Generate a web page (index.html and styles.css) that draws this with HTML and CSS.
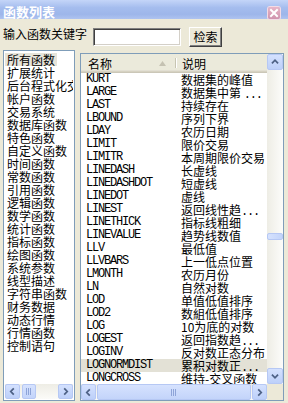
FILE: index.html
```html
<!DOCTYPE html>
<html lang="zh-CN">
<head>
<meta charset="utf-8">
<title>函数列表</title>
<link rel="stylesheet" href="styles.css">
</head>
<body>
<div class="window">
  <div class="titlebar">
    <span class="title">函数列表</span>
    <span class="close"><svg width="12" height="12" viewBox="0 0 12 12"><path d="M3 3 L9 9 M9 3 L3 9" stroke="#fff" stroke-width="2" stroke-linecap="square"/></svg></span>
  </div>
  <div class="search">
    <label class="kw-label">输入函数关键字</label>
    <input class="kw" type="text">
    <button class="btn">检索</button>
  </div>
  <div class="main">
    <div class="catlist">
      <ul class="cats">
        <li class="sel"><span>所有函数</span></li>
        <li><span>扩展统计</span></li>
        <li><span>后台程式化交易</span></li>
        <li><span>帐户函数</span></li>
        <li><span>交易系统</span></li>
        <li><span>数据库函数</span></li>
        <li><span>特色函数</span></li>
        <li><span>自定义函数</span></li>
        <li><span>时间函数</span></li>
        <li><span>常数函数</span></li>
        <li><span>引用函数</span></li>
        <li><span>逻辑函数</span></li>
        <li><span>数学函数</span></li>
        <li><span>统计函数</span></li>
        <li><span>指标函数</span></li>
        <li><span>绘图函数</span></li>
        <li><span>系统参数</span></li>
        <li><span>线型描述</span></li>
        <li><span>字符串函数</span></li>
        <li><span>财务数据</span></li>
        <li><span>动态行情</span></li>
        <li><span>行情函数</span></li>
        <li><span>控制语句</span></li>
      </ul>
      <div class="hscroll small">
        <span class="sbtn"><svg width="15" height="15" viewBox="0 0 15 15"><polyline points="9,4 5.5,7.5 9,11" fill="none" stroke="#4d6185" stroke-width="2"/></svg></span>
        <span class="thumb small-thumb"><svg width="8" height="7" viewBox="0 0 8 7"><path d="M1.5 0v7M3.5 0v7M5.5 0v7" stroke="#8ea4d8" stroke-width="1"/></svg></span>
        <span class="track"></span>
        <span class="sbtn"><svg width="15" height="15" viewBox="0 0 15 15"><polyline points="6,4 9.5,7.5 6,11" fill="none" stroke="#4d6185" stroke-width="2"/></svg></span>
      </div>
    </div>
    <div class="fnlist">
      <div class="fn-body">
        <div class="fn-head">
          <div class="h1">名称<span class="sort"><svg width="7" height="5" viewBox="0 0 7 5"><polygon points="0,5 3.5,0 7,5" fill="#c5c2b2"/></svg></span></div>
          <div class="h2">说明</div>
        </div>
        <div class="rows">
          <div class="row"><span class="n">KURT</span><span class="d">数据集的峰值</span></div>
          <div class="row"><span class="n">LARGE</span><span class="d">数据集中第 <span class="m">...</span></span></div>
          <div class="row"><span class="n">LAST</span><span class="d">持续存在</span></div>
          <div class="row"><span class="n">LBOUND</span><span class="d">序列下界</span></div>
          <div class="row"><span class="n">LDAY</span><span class="d">农历日期</span></div>
          <div class="row"><span class="n">LIMIT</span><span class="d">限价交易</span></div>
          <div class="row"><span class="n">LIMITR</span><span class="d">本周期限价交易</span></div>
          <div class="row"><span class="n">LINEDASH</span><span class="d">长虚线</span></div>
          <div class="row"><span class="n">LINEDASHDOT</span><span class="d">短虚线</span></div>
          <div class="row"><span class="n">LINEDOT</span><span class="d">虚线</span></div>
          <div class="row"><span class="n">LINEST</span><span class="d">返回线性趋<span class="m">...</span></span></div>
          <div class="row"><span class="n">LINETHICK</span><span class="d">指标线粗细</span></div>
          <div class="row"><span class="n">LINEVALUE</span><span class="d">趋势线数值</span></div>
          <div class="row"><span class="n">LLV</span><span class="d">最低值</span></div>
          <div class="row"><span class="n">LLVBARS</span><span class="d">上一低点位置</span></div>
          <div class="row"><span class="n">LMONTH</span><span class="d">农历月份</span></div>
          <div class="row"><span class="n">LN</span><span class="d">自然对数</span></div>
          <div class="row"><span class="n">LOD</span><span class="d">单值低值排序</span></div>
          <div class="row"><span class="n">LOD2</span><span class="d">数組低值排序</span></div>
          <div class="row"><span class="n">LOG</span><span class="d">10为底的对数</span></div>
          <div class="row"><span class="n">LOGEST</span><span class="d">返回指数趋<span class="m">...</span></span></div>
          <div class="row"><span class="n">LOGINV</span><span class="d">反对数正态分布</span></div>
          <div class="row sel"><span class="n">LOGNORMDIST</span><span class="d">累积对数正<span class="m">...</span></span></div>
          <div class="row"><span class="n">LONGCROSS</span><span class="d">维持-交叉函数</span></div>
        </div>
      </div>
      <div class="vscroll">
        <span class="sbtn v"><svg width="16" height="16" viewBox="0 0 16 16"><polyline points="4.5,9.5 8,6 11.5,9.5" fill="none" stroke="#4d6185" stroke-width="2"/></svg></span>
        <span class="vtrack"><span class="vthumb"></span></span>
        <span class="sbtn v"><svg width="16" height="16" viewBox="0 0 16 16"><polyline points="4.5,6.5 8,10 11.5,6.5" fill="none" stroke="#4d6185" stroke-width="2"/></svg></span>
      </div>
      <div class="hscroll big">
        <span class="sbtn"><svg width="15" height="15" viewBox="0 0 15 15"><polyline points="9,4 5.5,7.5 9,11" fill="none" stroke="#4d6185" stroke-width="2"/></svg></span>
        <span class="thumb big-thumb"><svg width="8" height="7" viewBox="0 0 8 7"><path d="M1.5 0v7M3.5 0v7M5.5 0v7" stroke="#8ea4d8" stroke-width="1"/></svg></span>
        <span class="sbtn"><svg width="15" height="15" viewBox="0 0 15 15"><polyline points="6,4 9.5,7.5 6,11" fill="none" stroke="#4d6185" stroke-width="2"/></svg></span>
      </div>
      <div class="corner"></div>
    </div>
  </div>
</div>
</body>
</html>
```
FILE: styles.css
```css
* { box-sizing: border-box; }
html, body { margin: 0; padding: 0; }
body {
  width: 288px;
  height: 403px;
  overflow: hidden;
  background: #ece9d8;
  font-family: "Noto Sans CJK SC", "Noto Sans", sans-serif;
  font-size: 12px;
  color: #000;
}
.window { display: flex; flex-direction: column; height: 403px; }

.titlebar {
  height: 19px;
  flex: none;
  display: flex;
  align-items: flex-start;
  padding: 0 8px 0 3px;
  background: linear-gradient(#c4d5f8, #a5bdee 40%, #9db6ea 75%, #aec3f0);
}
.title {
  color: #fff;
  font-weight: bold;
  font-size: 13px;
  line-height: 16px;
  margin-top: 4px;
}
.close {
  margin-left: auto;
  margin-top: 7px;
  width: 12px;
  height: 12px;
  border-radius: 2px;
  background: linear-gradient(#e7b6c8, #cf93ad);
  box-shadow: 0 0 0 1px #f3dbe5;
  display: flex;
}

.search {
  height: 31px;
  flex: none;
  display: flex;
  align-items: flex-start;
  padding: 8px 0 0 3px;
}
.kw-label { width: 90px; line-height: 14px; white-space: nowrap; }
.kw {
  width: 88px;
  height: 18px;
  margin: 1px 0 0 0;
  padding: 0;
  background: #fff;
  border: 1px solid;
  border-color: #808080 #fff #fff #808080;
  box-shadow: inset 1px 1px 0 #404040, inset -1px -1px 0 #d4d0c8;
}
.btn {
  width: 33px;
  height: 20px;
  margin-left: 8px;
  padding: 0;
  font-family: "Noto Sans CJK SC", sans-serif;
  font-size: 12px;
  line-height: 16px;
  color: #000;
  background: #ece9d8;
  border: 1px solid;
  border-color: #fff #404040 #404040 #fff;
  box-shadow: inset -1px -1px 0 #808080;
}

.main {
  flex: 1;
  display: flex;
  align-items: flex-start;
  padding-left: 3px;
  gap: 5px;
}
.catlist {
  width: 72px;
  height: 351px;
  border: 1px solid #7f9db9;
  background: #fff;
  padding: 1px;
  display: flex;
  flex-direction: column;
}
.cats {
  list-style: none;
  margin: 0;
  padding: 1px 0 0 0;
  flex: 1;
  overflow: hidden;
}
.cats li { line-height: 13px; height: 13px; white-space: nowrap; }
.cats li span { padding: 0 2px; display: inline-block; }
.cats li.sel span { background: #e6e4da; }

.hscroll { display: flex; flex: none; background: linear-gradient(#eeede5, #fbfbf8); }
.hscroll.small { height: 15px; }
.hscroll.big { height: 16px; grid-column: 1; grid-row: 2; }
.sbtn {
  flex: none;
  width: 15px;
  height: 15px;
  display: flex;
  align-items: center;
  justify-content: center;
  border: 1px solid #b6c8f4;
  border-radius: 2px;
  background: linear-gradient(#d4e1fe, #bdd0f9);
}
.hscroll.big .sbtn { width: 15px; height: 16px; }
.sbtn.v { width: 16px; height: 16px; }
.thumb {
  display: flex;
  align-items: center;
  justify-content: center;
  border: 1px solid #b6c8f4;
  border-radius: 2px;
  background: linear-gradient(#d6e2fe, #c3d4fa);
}
.small-thumb { width: 14px; margin-left: 2px; }
.big-thumb { flex: 1; margin: 0 1px; }
.track { flex: 1; }

.fnlist {
  width: 204px;
  height: 348px;
  margin-top: 3px;
  border: 1px solid #7f9db9;
  background: #fff;
  display: grid;
  grid-template-columns: 1fr 16px;
  grid-template-rows: 1fr 16px;
}
.fn-body { grid-column: 1; grid-row: 1; overflow: hidden; }
.fn-head {
  height: 19px;
  display: flex;
  background: #ebeadb;
  box-shadow: inset 0 -1px 0 #cbc7b8, inset 0 -2px 0 #d6d2c2, inset 0 -3px 0 #e2dfd3;
  line-height: 18px;
}
.h1 {
  position: relative;
  width: 95px;
  flex: none;
  padding-left: 7px;
  display: flex;
  align-items: center;
}
.h1::after {
  content: "";
  position: absolute;
  right: 0;
  top: 4px;
  bottom: 5px;
  width: 1px;
  background: #c7c5b2;
  box-shadow: 1px 0 0 #fff;
}
.sort { margin-left: auto; margin-right: 10px; display: flex; }
.h2 { padding-left: 6px; display: flex; align-items: center; }

.row { display: flex; height: 13px; line-height: 13px; white-space: nowrap; }
.row.sel { background: #e3e1d6; }
.n {
  width: 95px;
  flex: none;
  padding-left: 5px;
  font-family: "Liberation Mono", monospace;
  font-size: 12px;
  letter-spacing: -1.2px;
}
.d { padding-left: 5px; overflow: hidden; }
.m { font-family: "Liberation Mono", monospace; letter-spacing: -1.2px; }

.vscroll {
  grid-column: 2;
  grid-row: 1;
  display: flex;
  flex-direction: column;
  background: linear-gradient(to right, #eeede5, #fcfcfa);
}
.vtrack { flex: 1; display: flex; flex-direction: column; }
.vthumb {
  height: 7px;
  margin-top: 163px;
  border: 1px solid #b6c8f4;
  border-radius: 2px;
  background: linear-gradient(to right, #d6e2fe, #c3d4fa);
}
.corner { grid-column: 2; grid-row: 2; background: #ece9d8; }
```
